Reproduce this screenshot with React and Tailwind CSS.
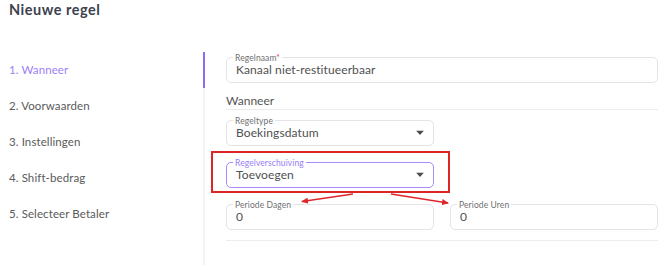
import React from "react";

const font = { fontFamily: 'Lato, "Open Sans", sans-serif' };

function Caret() {
  return (
    <svg width="8" height="5" viewBox="0 0 8 5" className="absolute right-[9px] top-1/2 -translate-y-1/2">
      <path d="M0 0 L8 0 L4 4.5 Z" fill="#4b4b4b" />
    </svg>
  );
}

function Field({ label, value, required, select, active, className = "" }) {
  return (
    <div
      className={`relative h-[26px] rounded-[5px] border ${
        active ? "border-[#a78bfa]" : "border-[#e4e4e7]"
      } flex items-center pl-[9px] ${className}`}
    >
      <span
        className={`absolute left-[6px] top-0 -translate-y-1/2 bg-white px-[2px] text-[8.5px] leading-none tracking-[0.1px] ${
          active ? "text-[#9b7cf6]" : "text-[#707070]"
        }`}
      >
        {label}
        {required && <span className="text-[#e53e6b]">*</span>}
      </span>
      <span className="text-[12px] text-[#505050] leading-none tracking-[0.1px]">{value}</span>
      {select && <Caret />}
    </div>
  );
}

export default function App() {
  const steps = ["1. Wanneer", "2. Voorwaarden", "3. Instellingen", "4. Shift-bedrag", "5. Selecteer Betaler"];
  return (
    <div className="relative w-[670px] h-[265px] bg-white overflow-hidden" style={font}>
      <div className="pl-[9px] pt-[1px] h-[52px] text-[14.5px] leading-[18px] font-bold tracking-[0.5px] text-[#3d424d]">Nieuwe regel</div>
      <div className="flex h-[213px]">
        <div className="w-[203px] flex flex-col">
          {steps.map((s, i) => (
            <div
              key={s}
              className={`h-9 flex items-center pl-[9px] text-[11.5px] tracking-[0.1px] ${
                i === 0 ? "text-[#9d7ff7]" : "text-[#5a5a5a]"
              }`}
            >
              {s}
            </div>
          ))}
        </div>
        <div className="w-[2px] flex flex-col bg-[#f3f3f4]">
          <div className="h-[36px] bg-[#8b6cf4]" />
        </div>
        <div className="flex-1 pl-[21px] pr-[12px] pt-[5px] flex flex-col">
          <Field label="Regelnaam" required value="Kanaal niet-restitueerbaar" />
          <div className="mt-[10px] h-[17px] flex items-center text-[12px] text-[#555] border-b border-[#ececec]">
            Wanneer
          </div>
          <Field className="mt-[10px] w-[208px]" label="Regeltype" value="Boekingsdatum" select />
          <Field className="mt-[16px] w-[208px]" label="Regelverschuiving" value="Toevoegen" select active />
          <div className="mt-[16px] flex gap-[16px]">
            <Field className="flex-1" label="Periode Dagen" value="0" />
            <Field className="flex-1" label="Periode Uren" value="0" />
          </div>
          <div className="mt-[10px] border-b border-[#ececec]" />
        </div>
      </div>
      <div className="absolute left-[211px] top-[151px] w-[239px] h-[42px] border-2 border-[#dc2626] pointer-events-none" />
      <svg className="absolute left-0 top-0 pointer-events-none" width="670" height="265">
        <defs>
          <marker id="ah" markerWidth="7" markerHeight="6" refX="6" refY="3" orient="auto" markerUnits="userSpaceOnUse">
            <path d="M0 0 L7 3 L0 6 Z" fill="#e0262b" />
          </marker>
        </defs>
        <line x1="353" y1="194" x2="302" y2="201.5" stroke="#e0262b" strokeWidth="1.5" markerEnd="url(#ah)" />
        <line x1="391" y1="194" x2="448" y2="203" stroke="#e0262b" strokeWidth="1.5" markerEnd="url(#ah)" />
      </svg>
    </div>
  );
}
